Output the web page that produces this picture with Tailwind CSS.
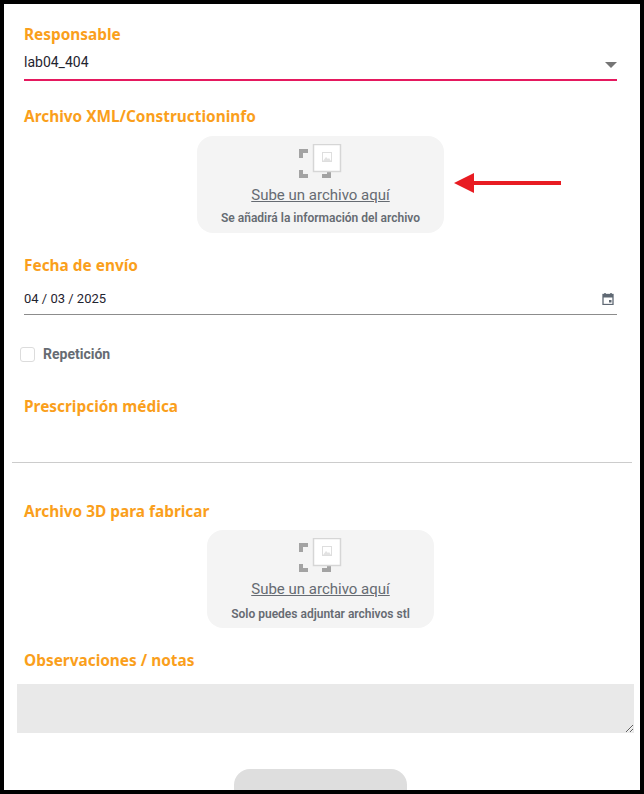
<!DOCTYPE html>
<html lang="es">
<head>
    <meta charset="UTF-8">
    <meta name="viewport" content="width=device-width, initial-scale=1.0">
    <title>Nuevo envío</title>
    <script src="https://cdn.jsdelivr.net/npm/@tailwindcss/browser@4"></script>
</head>
<body class="bg-black font-['Roboto',sans-serif]">
    <div class="relative h-[794px] w-[644px] overflow-hidden border-4 border-black bg-white">
        <form class="flex flex-col pt-[21px]">
            <!-- Responsable -->
            <div class="mx-5 h-5 text-[15.4px] leading-5 font-bold text-[#fa9f1c] font-['Noto_Sans',sans-serif]">Responsable</div>
            <div class="mt-[4px] mr-[23px] ml-5 flex h-[32px] items-center justify-between border-b-2 border-[#e5195f] pb-[4px] text-sm text-[#1f2430]">
                <span>lab04_404</span>
                <svg class="mt-[6px] h-[6px] w-3" viewBox="0 0 12 6"><path d="M0 0h12L6 6z" fill="#757575"/></svg>
            </div>

            <!-- Archivo XML -->
            <div class="mx-5 mt-[26px] h-5 text-[15.4px] leading-5 font-bold text-[#fa9f1c] font-['Noto_Sans',sans-serif]">Archivo XML/Constructioninfo</div>
            <div class="mt-[9px] ml-[193px] flex h-[97px] w-[247px] flex-col items-center rounded-2xl bg-[#f4f4f4] pt-2">
                <svg class="ml-[-2px] h-9 w-11 shrink-0" viewBox="0 0 44 36" fill="none">
                    <path d="M1 14V5h9v4H5v5zM1 26h4v4h5v4H1zM33 26h-4v4h-5v4h9z" fill="#a3a3a3"/>
                    <rect x="15.500" y="0.500" width="27" height="27" fill="#fff" stroke="#d6d6d6" stroke-width="1.500"/>
                    <rect x="24.500" y="8.500" width="9" height="9" stroke="#dedede"/>
                    <path d="M25 17l3-4 2 2 1-1 2 3z" fill="#e2e2e2"/>
                </svg>
                <span class="mt-[5px] text-[15px] leading-5 text-[#666b72] underline">Sube un archivo aquí</span>
                <span class="mt-[3px] text-xs leading-[20px] font-semibold text-[#666b72]">Se añadirá la información del archivo</span>
            </div>

            <!-- Fecha -->
            <div class="mx-5 mt-[23px] h-5 text-[15.4px] leading-5 font-bold text-[#fa9f1c] font-['Noto_Sans',sans-serif]">Fecha de envío</div>
            <div class="mt-[10px] mr-[23px] ml-5 flex h-[29px] items-center justify-between border-b border-[#8c8c8c] pb-[2px] text-[13px] text-[#1f2430]">
                <span>04 / 03 / 2025</span>
                <svg class="mr-[3px] h-3 w-3" viewBox="0 0 12 12" fill="none">
                    <path d="M3 0v2M9 0v2" stroke="#5f6873" stroke-width="1.500"/>
                    <rect x="1" y="1.500" width="10" height="10" stroke="#5f6873" stroke-width="1.300"/>
                    <path d="M1 2h10v2.500H1z" fill="#5f6873"/>
                    <rect x="7" y="7" width="2.500" height="2.500" fill="#5f6873"/>
                </svg>
            </div>

            <!-- Repetición -->
            <label class="mt-[31px] ml-4 flex h-[16px] items-center gap-2">
                <span class="h-[15px] w-[15px] rounded-[3px] border border-[#dcdcdc] bg-white"></span>
                <span class="text-[14px] font-bold text-[#666b72]">Repetición</span>
            </label>

            <!-- Prescripción -->
            <div class="mx-5 mt-[35px] h-5 text-[15.4px] leading-5 font-bold text-[#fa9f1c] font-['Noto_Sans',sans-serif]">Prescripción médica</div>
            <hr class="mx-2 mt-[45px] border-[#cccccc]">

            <!-- Archivo 3D -->
            <div class="mx-5 mt-[39px] h-5 text-[15.4px] leading-5 font-bold text-[#fa9f1c] font-['Noto_Sans',sans-serif]">Archivo 3D para fabricar</div>
            <div class="mt-2 ml-[203px] flex h-[98px] w-[227px] flex-col items-center rounded-2xl bg-[#f4f4f4] pt-2">
                <svg class="ml-[-2px] h-9 w-11 shrink-0" viewBox="0 0 44 36" fill="none">
                    <path d="M1 14V5h9v4H5v5zM1 26h4v4h5v4H1zM33 26h-4v4h-5v4h9z" fill="#a3a3a3"/>
                    <rect x="15.500" y="0.500" width="27" height="27" fill="#fff" stroke="#d6d6d6" stroke-width="1.500"/>
                    <rect x="24.500" y="8.500" width="9" height="9" stroke="#dedede"/>
                    <path d="M25 17l3-4 2 2 1-1 2 3z" fill="#e2e2e2"/>
                </svg>
                <span class="mt-[5px] text-[15px] leading-5 text-[#666b72] underline">Sube un archivo aquí</span>
                <span class="mt-[5px] text-xs leading-[20px] font-semibold text-[#666b72]">Solo puedes adjuntar archivos stl</span>
            </div>

            <!-- Observaciones -->
            <div class="mx-5 mt-[23px] h-5 text-[15.4px] leading-5 font-bold text-[#fa9f1c] font-['Noto_Sans',sans-serif]">Observaciones / notas</div>
            <textarea class="mt-[13px] ml-[13px] block h-[49px] w-[617px] bg-[#e9e9e9]"></textarea>

            <button type="button" class="mt-9 ml-[230px] h-[60px] w-[173px] rounded-2xl bg-[#dedede]"></button>
        </form>

        <!-- flecha roja sobre la captura -->
        <svg class="absolute top-[169px] left-[450px] h-5 w-[108px]" viewBox="0 0 108 20">
            <path d="M0 10L20 0v8h87v4H20v8z" fill="#e81c22"/>
        </svg>
    </div>
</body>
</html>
